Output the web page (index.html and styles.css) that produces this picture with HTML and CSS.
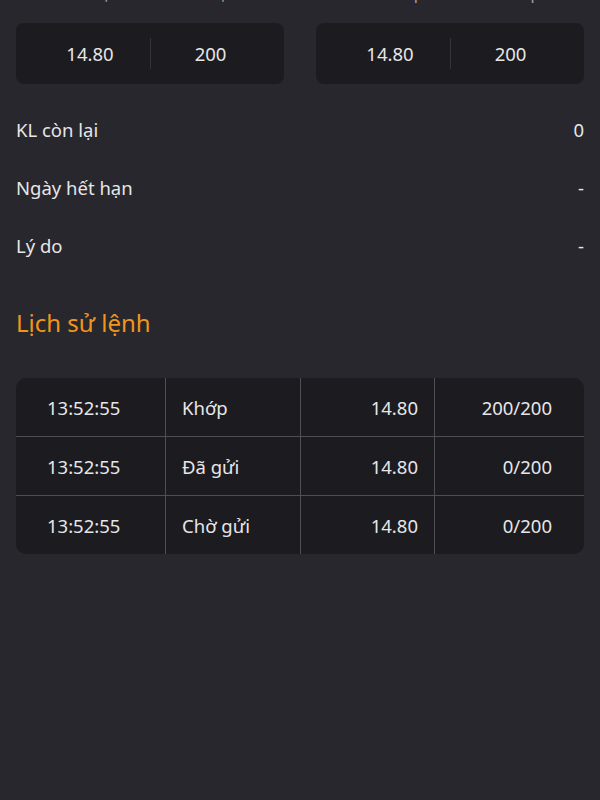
FILE: index.html
```html
<!DOCTYPE html>
<html lang="vi">
<head>
  <meta charset="UTF-8" />
  <title>Chi tiết lệnh</title>
  <link rel="stylesheet" href="styles.css">
</head>
<body>
  <main class="page">

    <!-- Giá / KL đặt và khớp -->
    <section class="summary">
      <div class="group">
        <div class="labels">
          <span>Giá đặt</span>
          <span>KL đặt</span>
        </div>
        <div class="card">
          <span>14.80</span>
          <span class="divided">200</span>
        </div>
      </div>
      <div class="group">
        <div class="labels">
          <span>Giá khớp</span>
          <span>KL khớp</span>
        </div>
        <div class="card">
          <span>14.80</span>
          <span class="divided">200</span>
        </div>
      </div>
    </section>

    <!-- Thông tin thêm -->
    <section class="details">
      <div class="detail-row">
        <span>KL còn lại</span>
        <span>0</span>
      </div>
      <div class="detail-row">
        <span>Ngày hết hạn</span>
        <span>-</span>
      </div>
      <div class="detail-row">
        <span>Lý do</span>
        <span>-</span>
      </div>
    </section>

    <h2 class="section-title">Lịch sử lệnh</h2>

    <div class="history">
      <div class="history-row">
        <span class="col-time">13:52:55</span>
        <span class="col-status">Khớp</span>
        <span class="col-price">14.80</span>
        <span class="col-qty">200/200</span>
      </div>
      <div class="history-row">
        <span class="col-time">13:52:55</span>
        <span class="col-status">Đã gửi</span>
        <span class="col-price">14.80</span>
        <span class="col-qty">0/200</span>
      </div>
      <div class="history-row">
        <span class="col-time">13:52:55</span>
        <span class="col-status">Chờ gửi</span>
        <span class="col-price">14.80</span>
        <span class="col-qty">0/200</span>
      </div>
    </div>

  </main>
</body>
</html>
```

FILE: styles.css
```css
body {
  margin: 0;
  background: #28272d;
  color: #e6e6e8;
  font-family: "Noto Sans", "Liberation Sans", sans-serif;
  min-height: 800px;
}
.page {
  padding: 0 16px;
}

/* khối giá / KL */
.summary {
  display: grid;
  grid-template-columns: 1fr 1fr;
  gap: 32px;
  margin-top: -18px;
}
.labels {
  display: grid;
  grid-template-columns: 1fr 1fr;
  padding: 0 14px;
  text-align: center;
  font-size: 16px;
  line-height: 22px;
  color: #a3a2a8;
  margin-bottom: 19px;
}
.card {
  display: grid;
  grid-template-columns: 1fr 1fr;
  align-items: center;
  height: 61px;
  padding: 0 14px;
  background: #1c1b20;
  border-radius: 8px;
  font-size: 18.5px;
  text-align: center;
}
.card span {
  line-height: 31px;
}
.card .divided {
  border-left: 1px solid #34333a;
}

/* thông tin thêm */
.details {
  margin-top: 16px;
}
.detail-row {
  display: flex;
  justify-content: space-between;
  align-items: center;
  height: 58px;
  font-size: 18.5px;
}

.section-title {
  margin: 33px 0 39px;
  font-size: 24px;
  line-height: 32px;
  font-weight: normal;
  color: #f0961c;
}

/* lịch sử lệnh */
.history {
  background: #1c1b20;
  border-radius: 10px;
  overflow: hidden;
  font-size: 18.5px;
}
.history-row {
  display: grid;
  grid-template-columns: 149px 135px 134px 1fr;
  height: 58px;
}
.history-row + .history-row {
  border-top: 1px solid #4f4e55;
}
.history-row span {
  display: flex;
  align-items: center;
}
.history-row span + span {
  border-left: 1px solid #4f4e55;
}
.col-time {
  padding-left: 31px;
}
.col-status {
  padding-left: 16px;
}
.col-price {
  justify-content: flex-end;
  padding-right: 16px;
}
.col-qty {
  justify-content: flex-end;
  padding-right: 32px;
}
```
